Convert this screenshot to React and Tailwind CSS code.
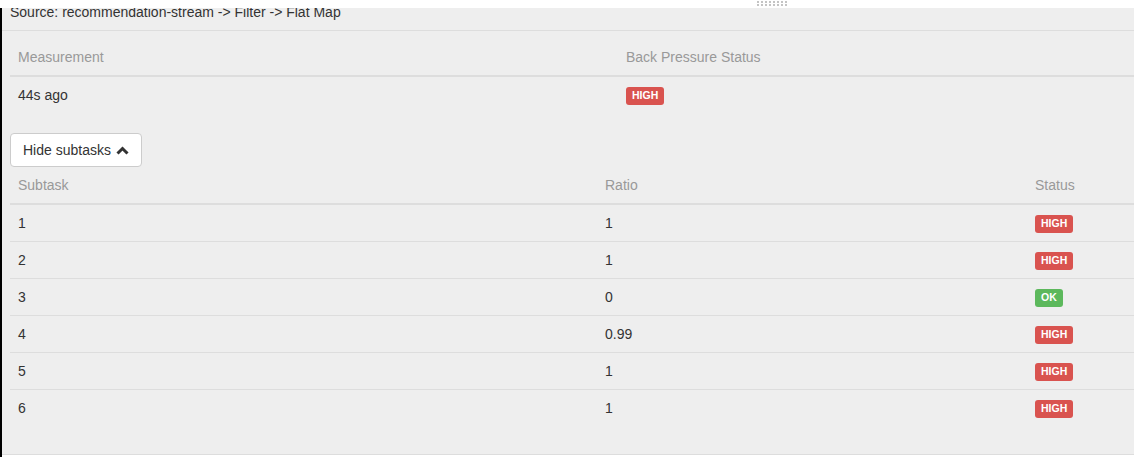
const subtasks = [
  { id: 1, ratio: "1", status: "HIGH" },
  { id: 2, ratio: "1", status: "HIGH" },
  { id: 3, ratio: "0", status: "OK" },
  { id: 4, ratio: "0.99", status: "HIGH" },
  { id: 5, ratio: "1", status: "HIGH" },
  { id: 6, ratio: "1", status: "HIGH" },
];

const Badge = ({ status }) => (
  <span
    className={
      status === "OK"
        ? "inline-flex items-center h-[18px] px-[6px] mt-px rounded-[3px] bg-[#5cb85c] text-white text-[10.5px] font-bold leading-none"
        : "inline-flex items-center h-[18px] px-[6px] mt-px rounded-[3px] bg-[#d9534f] text-white text-[10.5px] font-bold leading-none"
    }
  >
    {status}
  </span>
);

const Grip = () => (
  <div className="flex flex-col gap-px pt-px ml-[757px]">
    {[0, 1].map((r) => (
      <div key={r} className="flex gap-[2px]">
        {[0, 1, 2, 3, 4, 5, 6, 7].map((c) => (
          <span key={c} className="w-[2px] h-[2px] bg-[#c4c4c4]" />
        ))}
      </div>
    ))}
  </div>
);

const App = () => {
  return (
    <div className="w-[1134px] h-[457px] overflow-hidden bg-white font-['Liberation_Sans',Arial,sans-serif] text-[14px] leading-5 text-[#333]">
      <div className="h-2 bg-white">
        <Grip />
      </div>
      <div className="h-[449px] border-l-2 border-black flex flex-col">
        <div className="h-[447px] bg-[#eee] overflow-hidden border-b border-[#ddd]">
          {/* vertex title, partly scrolled out of view */}
          <div className="-mt-[6px] pl-2 pb-2 border-b border-[#ddd] whitespace-nowrap">
            Source: recommendation-stream -&gt; Filter -&gt; Flat Map
          </div>

          <div className="px-2">
            {/* back pressure summary */}
            <div className="w-[1216px] mt-2 mb-5" data-testid="bp-summary">
              <div className="flex border-b-2 border-[#ddd] text-[#999]">
                <div className="w-[608px] p-2">Measurement</div>
                <div className="flex-1 p-2">Back Pressure Status</div>
              </div>
              <div className="flex">
                <div className="w-[608px] p-2">44s ago</div>
                <div className="flex-1 p-2 flex items-center">
                  <Badge status="HIGH" />
                </div>
              </div>
            </div>

            <button className="flex items-center gap-[5px] h-[34px] px-3 bg-white border border-[#ccc] rounded-[4px] text-[#333]">
              Hide subtasks
              <svg width="13" height="9" viewBox="0 0 13 9" className="mt-px">
                <polyline
                  points="1.5,7.5 6.5,2.5 11.5,7.5"
                  fill="none"
                  stroke="#333"
                  strokeWidth="3"
                />
              </svg>
            </button>

            {/* subtasks */}
            <div className="w-[1216px]" data-testid="bp-subtasks">
              <div className="flex border-b-2 border-[#ddd] text-[#999]">
                <div className="w-[587px] p-2">Subtask</div>
                <div className="w-[430px] p-2">Ratio</div>
                <div className="flex-1 p-2">Status</div>
              </div>
              {subtasks.map((s, i) => (
                <div
                  key={s.id}
                  className={i === 0 ? "flex" : "flex border-t border-[#ddd]"}
                >
                  <div className="w-[587px] p-2">{s.id}</div>
                  <div className="w-[430px] p-2">{s.ratio}</div>
                  <div className="flex-1 p-2 flex items-center">
                    <Badge status={s.status} />
                  </div>
                </div>
              ))}
            </div>
          </div>
        </div>
      </div>
    </div>
  );
};

export default App;
